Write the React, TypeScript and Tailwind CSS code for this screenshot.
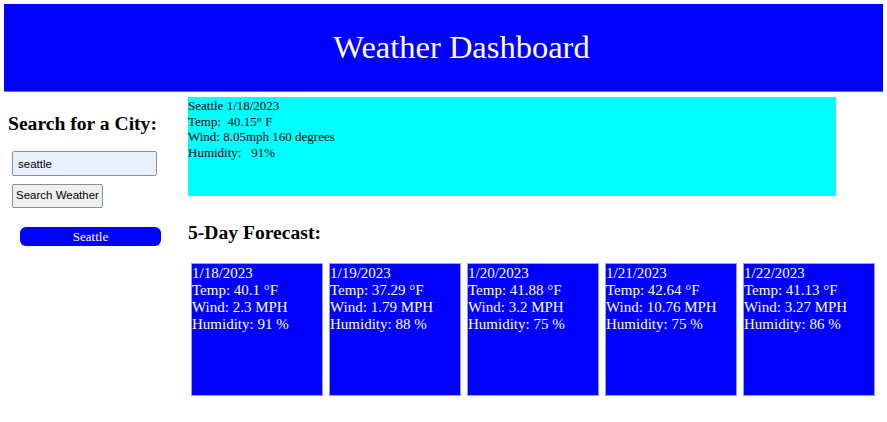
const FORECAST = [
  { date: '1/18/2023', temp: '40.1', wind: '2.3', humidity: '91' },
  { date: '1/19/2023', temp: '37.29', wind: '1.79', humidity: '88' },
  { date: '1/20/2023', temp: '41.88', wind: '3.2', humidity: '75' },
  { date: '1/21/2023', temp: '42.64', wind: '10.76', humidity: '75' },
  { date: '1/22/2023', temp: '41.13', wind: '3.27', humidity: '86' },
];

export default function App() {
  return (
    <div className="w-[887px] h-[422px] bg-white font-['Liberation_Serif',serif] text-black overflow-hidden">
      <header className="mx-1 mt-1 h-[88px] bg-[#0000ff] border-b border-[#6b6bd6] flex items-center justify-center pl-[36px]">
        <h1 className="text-[32.5px] text-white leading-none">Weather Dashboard</h1>
      </header>

      <div className="flex">
        <aside className="w-[188px] shrink-0 flex flex-col items-start">
          <h3 className="ml-2 mt-[20px] text-[19.6px] font-bold leading-[24px]">Search for a City:</h3>
          <input
            defaultValue="seattle"
            className="ml-3 mt-[15px] w-[145px] h-[25px] px-[5px] bg-[#e8f0fe] border border-[#8f8f8f] rounded-[2px] font-['Liberation_Sans',sans-serif] text-[11.5px] text-black outline-none"
          />
          <button className="ml-3 mt-[8px] w-[91px] h-[24px] px-0 whitespace-nowrap bg-[#efefef] border border-[#8f8f8f] rounded-[2px] font-['Liberation_Sans',sans-serif] text-[11.5px] text-black">
            Search Weather
          </button>
          <button className="ml-5 mt-[19px] w-[141px] h-[19px] bg-[#0000ff] rounded-[6px] text-white text-[13px] leading-[19px]">
            Seattle
          </button>
        </aside>

        <main className="flex flex-col">
          <div className="mt-[5px] w-[648px] h-[99px] bg-[#00ffff] text-[13px] leading-[15.5px] pt-[1px]">
            <div>Seattle 1/18/2023</div>
            <div>Temp:&nbsp; 40.15° F</div>
            <div>Wind: 8.05mph 160 degrees</div>
            <div>Humidity: &nbsp; 91%</div>
          </div>

          <h3 className="mt-[25px] text-[19.6px] font-bold leading-[24px]">5-Day Forecast:</h3>

          <div className="ml-1 mt-[19px] flex gap-[8px]">
            {FORECAST.map((day) => (
              <div
                key={day.date}
                className="w-[130px] h-[131px] bg-[#0000ff] ring-1 ring-[#9a9af0] text-white text-[15px] leading-[17px] pt-[1px]"
              >
                <div>{day.date}</div>
                <div>Temp: {day.temp} °F</div>
                <div>Wind: {day.wind} MPH</div>
                <div>Humidity: {day.humidity} %</div>
              </div>
            ))}
          </div>
        </main>
      </div>
    </div>
  );
}
